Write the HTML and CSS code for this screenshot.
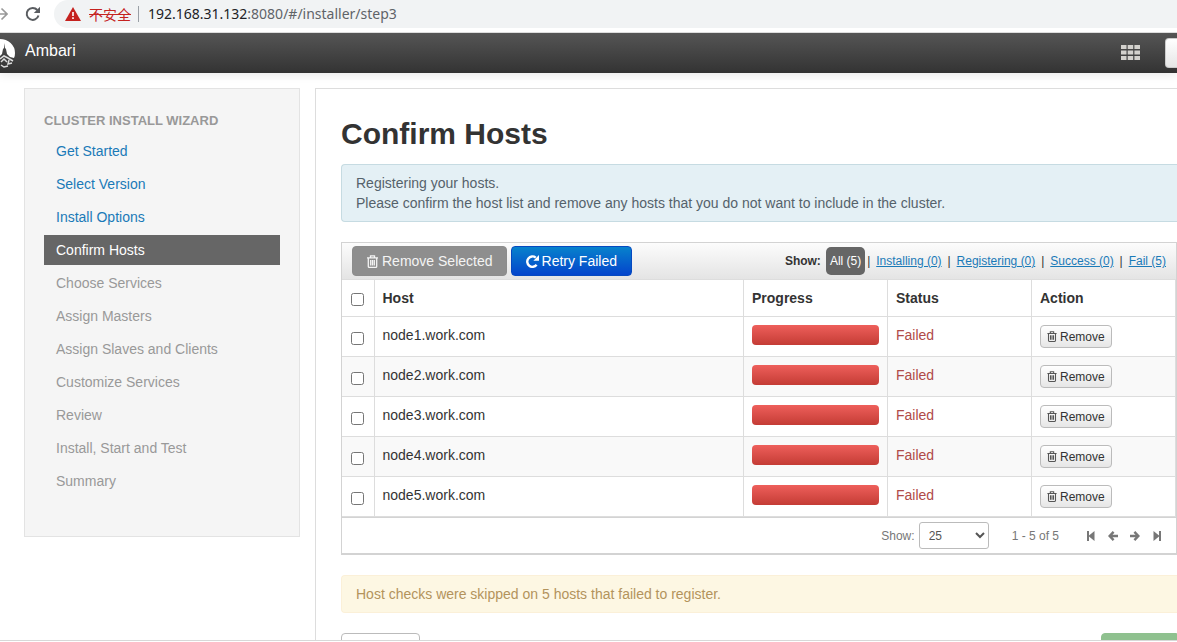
FILE: index.html
```html
<!DOCTYPE html>
<html lang="en">
<head>
<meta charset="utf-8">
<title>Ambari</title>
<link rel="stylesheet" href="styles.css">
</head>
<body>
<svg class="defs" aria-hidden="true">
  <symbol id="trash" viewBox="0 0 12 13"><path fill="none" stroke="currentColor" stroke-width="1.3" d="M.5 2.800h11M4 2.500V.8h4v1.700M1.800 3v8.400q0 1 1 1h6.400q1 0 1-1V3M4.200 5v5.500M6 5v5.500M7.800 5v5.500"/></symbol>
  <symbol id="repeat" viewBox="0 0 12 12"><path fill="none" stroke="currentColor" stroke-width="2.200" d="M9.800 9A4.800 4.800 0 1 1 9 2.400"/><path fill="currentColor" d="M12 0v5.200H6.800z"/></symbol>
  <symbol id="first" viewBox="0 0 10 10"><path fill="currentColor" d="M1 0h2v4.500L8.500 0v10L3 5.500V10H1z"/></symbol>
  <symbol id="arrow" viewBox="0 0 10 10"><path fill="none" stroke="currentColor" stroke-width="2.400" d="M5.600.8 1.600 5l4 4.200M1.700 5H10"/></symbol>
</svg>
<header class="browser">
  <svg class="forward" viewBox="0 0 8 14"><path fill="none" stroke="#999" stroke-width="1.600" d="M0 7h7M1.500 1.500 7 7l-5.500 5.500"/></svg>
  <svg class="reload" viewBox="0 0 16 16"><path fill="none" stroke="#5a5d61" stroke-width="2" d="M13.500 9.500A6 6 0 1 1 12.300 4"/><path fill="#5a5d61" d="M15 .8V7H8.800z"/></svg>
  <div class="address">
    <svg class="warning" viewBox="0 0 16 14"><path fill="#c5221f" d="M8 0l8 14H0z"/><path fill="#fff" d="M7.200 5h1.600v4H7.200zM7.200 10.300h1.600V12H7.200z"/></svg>
    <s class="insecure" lang="zh">不安全</s>
    <span class="divider"></span>
    <span class="url"><span class="origin">192.168.31.132</span>:8080/#/installer/step3</span>
  </div>
</header>
<div class="page">
  <nav class="navbar">
    <svg class="logo" viewBox="0 0 16 32"><path fill="#fff" d="M0 2a15 14 0 0 1 15 14q0 3-1 5l-4-1-3-3-1-5-1-1-.5-5L4 11l-1 1-1 5-2 2z"/><path fill="none" stroke="#ddd" stroke-width="1.500" d="M0 22l4-3 4 2 5 3M1 25l3-3 3 3M9 23l-1 4 4-1M1 28l3 2 4-1"/></svg>
    <span class="brand">Ambari</span>
    <svg class="apps" viewBox="0 0 19 15"><path fill="#d3d1cd" d="M0 0h5.500v4H0zM6.700 0h5.500v4H6.700zM13.400 0H19v4h-5.600zM0 5.500h5.500v4H0zM6.700 5.500h5.500v4H6.700zM13.400 5.500H19v4h-5.600zM0 11h5.500v4H0zM6.700 11h5.500v4H6.700zM13.400 11H19v4h-5.600z"/></svg>
    <button class="user" aria-label="User menu"></button>
  </nav>
  <div class="columns">
    <aside class="wizard">
      <h2 class="wizard-title">CLUSTER INSTALL WIZARD</h2>
      <ul class="steps">
        <li><a class="step" href="#">Get Started</a></li>
        <li><a class="step" href="#">Select Version</a></li>
        <li><a class="step" href="#">Install Options</a></li>
        <li><a class="step active" href="#" aria-current="step">Confirm Hosts</a></li>
        <li><span class="step">Choose Services</span></li>
        <li><span class="step">Assign Masters</span></li>
        <li><span class="step">Assign Slaves and Clients</span></li>
        <li><span class="step">Customize Services</span></li>
        <li><span class="step">Review</span></li>
        <li><span class="step">Install, Start and Test</span></li>
        <li><span class="step">Summary</span></li>
      </ul>
    </aside>
    <main class="content">
      <h1 class="title">Confirm Hosts</h1>
      <p class="alert info">Registering your hosts.<br>Please confirm the host list and remove any hosts that you do not want to include in the cluster.</p>
      <section class="hosts">
        <div class="toolbar">
          <button class="btn muted"><svg class="icon"><use href="#trash"/></svg>Remove Selected</button>
          <button class="btn primary"><svg class="icon"><use href="#repeat"/></svg>Retry Failed</button>
          <div class="filters">
            <b class="filter-label">Show:</b>
            <a class="filter selected" href="#">All (5)</a><span class="bar first-bar">|</span>
            <a class="filter" href="#">Installing (0)</a><span class="bar">|</span>
            <a class="filter" href="#">Registering (0)</a><span class="bar">|</span>
            <a class="filter" href="#">Success (0)</a><span class="bar">|</span>
            <a class="filter" href="#">Fail (5)</a>
          </div>
        </div>
        <table class="table">
          <colgroup><col class="col-check"><col><col class="col-side"><col class="col-side"><col class="col-side"></colgroup>
          <thead><tr><th><input class="check" type="checkbox" aria-label="Select all hosts"></th><th>Host</th><th>Progress</th><th>Status</th><th>Action</th></tr></thead>
          <tbody>
            <tr><td><input class="check" type="checkbox" aria-label="Select node1.work.com"></td><td>node1.work.com</td><td><div class="progress"></div></td><td class="failed">Failed</td><td><button class="btn mini"><svg class="icon"><use href="#trash"/></svg>Remove</button></td></tr>
            <tr><td><input class="check" type="checkbox" aria-label="Select node2.work.com"></td><td>node2.work.com</td><td><div class="progress"></div></td><td class="failed">Failed</td><td><button class="btn mini"><svg class="icon"><use href="#trash"/></svg>Remove</button></td></tr>
            <tr><td><input class="check" type="checkbox" aria-label="Select node3.work.com"></td><td>node3.work.com</td><td><div class="progress"></div></td><td class="failed">Failed</td><td><button class="btn mini"><svg class="icon"><use href="#trash"/></svg>Remove</button></td></tr>
            <tr><td><input class="check" type="checkbox" aria-label="Select node4.work.com"></td><td>node4.work.com</td><td><div class="progress"></div></td><td class="failed">Failed</td><td><button class="btn mini"><svg class="icon"><use href="#trash"/></svg>Remove</button></td></tr>
            <tr><td><input class="check" type="checkbox" aria-label="Select node5.work.com"></td><td>node5.work.com</td><td><div class="progress"></div></td><td class="failed">Failed</td><td><button class="btn mini"><svg class="icon"><use href="#trash"/></svg>Remove</button></td></tr>
          </tbody>
        </table>
        <div class="pager">
          <label for="size">Show:</label>
          <select class="size" id="size"><option>10</option><option selected>25</option><option>50</option></select>
          <span class="range">1 - 5 of 5</span>
          <div class="pages">
            <button class="page-btn" aria-label="First page"><svg class="icon"><use href="#first"/></svg></button>
            <button class="page-btn" aria-label="Previous page"><svg class="icon"><use href="#arrow"/></svg></button>
            <button class="page-btn" aria-label="Next page"><svg class="icon flip"><use href="#arrow"/></svg></button>
            <button class="page-btn" aria-label="Last page"><svg class="icon flip"><use href="#first"/></svg></button>
          </div>
        </div>
      </section>
      <p class="alert warn">Host checks were skipped on 5 hosts that failed to register.</p>
      <div class="actions">
        <button class="btn back" aria-label="Back"></button>
        <button class="btn next" aria-label="Next"></button>
      </div>
    </main>
  </div>
</div>
</body>
</html>
```
FILE: styles.css
```css
* { box-sizing: border-box; }
body {
  display: flex;
  flex-direction: column;
  height: 100vh;
  margin: 0;
  overflow: hidden;
  background: #fff;
  color: #333;
  font: 14px/20px "Liberation Sans", Arial, sans-serif;
}
button, select { font: inherit; }
.defs { position: absolute; width: 0; height: 0; }

.browser {
  display: flex;
  align-items: center;
  height: 32px;
  padding-bottom: 4px;
  flex: none;
}
.forward { width: 8px; height: 14px; margin-right: 17px; }
.reload { width: 16px; height: 16px; margin-right: 13px; }
.address {
  display: flex;
  align-items: center;
  flex: 1;
  height: 28px;
  padding-left: 11px;
  border-radius: 14px 0 0 14px;
  background: #f1f3f4;
  color: #5f6368;
  font-family: "Noto Sans", "Noto Sans CJK SC", sans-serif;
  white-space: nowrap;
}
.warning { width: 16px; height: 14px; margin-right: 8px; }
.insecure { color: #c5221f; font-family: "Noto Sans CJK SC", sans-serif; }
.divider { width: 1px; height: 16px; margin: 0 9px 0 7px; background: #9aa0a6; }
.origin { color: #202124; }

.page {
  flex: 1;
  min-height: 0;
  margin-bottom: 1px;
  overflow: hidden;
  border-bottom: 1px solid #d8d8d8;
}
.navbar {
  display: flex;
  align-items: center;
  height: 41px;
  border-top: 1px solid #ddd;
  background: linear-gradient(#555, #333);
  box-shadow: 0 1px 10px rgba(0, 0, 0, .1);
}
.logo { width: 16px; height: 32px; margin-right: 9px; }
.brand { flex: 1; padding-bottom: 4px; color: #fff; font-size: 16px; }
.apps { width: 19px; height: 15px; margin: 0 25px 2px 0; }
.user {
  width: 12px;
  height: 30px;
  padding: 0;
  border: 1px solid #ccc;
  border-right: 0;
  border-radius: 4px 0 0 4px;
  background: linear-gradient(#fff, #e6e6e6);
}

.columns {
  display: flex;
  align-items: flex-start;
  gap: 15px;
  padding: 15px 0 0 24px;
}
.wizard {
  flex: none;
  width: 276px;
  padding: 16px 19px 37px;
  border: 1px solid #e3e3e3;
  background: #f5f5f5;
}
.wizard-title { margin: 0; color: #999; font-size: 13px; line-height: 31px; }
.steps { margin: 0; padding: 0; list-style: none; }
.step {
  display: block;
  margin-bottom: 3px;
  padding: 5px 12px;
  color: #999;
  text-decoration: none;
}
a.step { color: #1a7ab8; }
a.active { background: #666; color: #fff; }

.content {
  flex: 1;
  min-width: 0;
  padding: 25px 0 0 25px;
  border: 1px solid #ddd;
  border-width: 1px 0 0 1px;
}
.title { margin: 0 0 10px; font-size: 30px; line-height: 40px; }
.alert {
  margin: 0 0 20px;
  padding: 8px 14px;
  border: 1px solid;
  border-right: 0;
  border-radius: 4px 0 0 4px;
}
.info { border-color: #c6dbe2; background: #e4f0f5; color: #55626b; }
.warn { border-color: #fbf0d8; background: #fdf7e3; color: #b3935c; }

.hosts { margin-bottom: 20px; border: 1px solid #d3d3d3; border-bottom-width: 2px; }
.toolbar {
  display: flex;
  align-items: center;
  gap: 4px;
  height: 36px;
  padding: 0 10px;
  background: linear-gradient(#fcfcfc, #e4e4e4);
}
.btn {
  display: inline-flex;
  align-items: center;
  justify-content: center;
  gap: 3px;
  padding: 4px 13px;
  border: 1px solid #bbb;
  border-radius: 4px;
  white-space: nowrap;
}
.icon { width: 13px; height: 13px; }
.muted { border-color: #8c8c8c; background: #8e8e8e; color: #f4f4f4; }
.primary { padding: 4px 14px; border-color: #0649c0; background: linear-gradient(#0782cc, #0444cc); color: #fff; }
.filters { display: flex; align-items: center; margin-left: auto; font-size: 12px; white-space: nowrap; }
.filter-label { margin-right: 5px; }
.filter { color: #1a7ab8; }
.selected { padding: 4px 4px; border-radius: 5px; background: #666; color: #fff; text-decoration: none; }
.bar { width: 15px; text-align: center; }
.first-bar { width: 11px; text-align: left; padding-left: 2px; }

.table {
  width: 100%;
  border-collapse: collapse;
  table-layout: fixed;
}
.col-check { width: 32px; }
.col-side { width: 144px; }
.table th, .table td {
  height: 40px;
  padding: 8px;
  border: 1px solid #ddd;
  text-align: left;
  vertical-align: top;
}
.table th { height: 37px; }
.table th:first-child, .table td:first-child { border-left: 0; padding-left: 9px; }
.table tbody tr:nth-child(even) { background: #f9f9f9; }
.check { display: block; width: 13px; height: 13px; margin: 7px 0 0; }
.table th .check { margin-top: 5px; }
.progress { height: 20px; border-radius: 4px; background: linear-gradient(#ee5f5b, #c43c35); }
.table .failed { color: #b04a48; }
.mini {
  height: 23px;
  padding: 0 6px;
  background: linear-gradient(#fff, #e6e6e6);
  color: #333;
  font-size: 12px;
  vertical-align: top;
}
.mini .icon { height: 11px; width: 10px; color: #555; }

.pager {
  display: flex;
  align-items: center;
  height: 36px;
  padding-right: 14px;
  justify-content: flex-end;
  border-top: 1px solid #d3d3d3;
  color: #777;
  font-size: 12px;
}
.size {
  width: 70px;
  height: 27px;
  margin: 0 23px 0 4px;
  padding-left: 5px;
  border: 1px solid #bbb;
  border-radius: 3px;
  background: #fff;
  color: #555;
  font-size: 12px;
}
.range { margin-right: 27px; }
.pages { display: flex; gap: 12px; }
.page-btn { display: flex; padding: 0; border: 0; background: none; color: #777; }
.page-btn .icon { width: 10px; height: 10px; }
.flip { transform: scaleX(-1); }

.actions { display: flex; justify-content: space-between; }
.btn.back { width: 79px; height: 30px; background: #fff; }
.btn.next { width: 76px; height: 30px; border-color: #8fc18f; border-radius: 4px 0 0 4px; background: #8fc18f; }
```
